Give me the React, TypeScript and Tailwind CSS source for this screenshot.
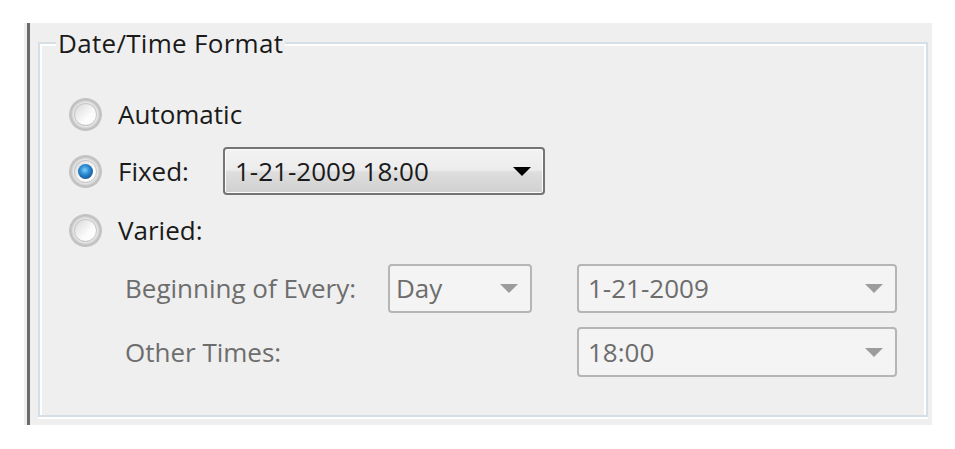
import React from "react";

function Arrow({ color }: { color: string }) {
  return (
    <svg width="18" height="9" viewBox="0 0 18 9" className="shrink-0">
      <path d="M0 0 H18 L9 9 Z" fill={color} />
    </svg>
  );
}

function Radio({ checked }: { checked?: boolean }) {
  return (
    <div className="relative w-[31px] h-[31px] shrink-0 rounded-full bg-[radial-gradient(circle_at_50%_50%,#f4f4f4_0%,#e6e6e6_55%,#b0b0b0_72%,#8a8a8a_100%)] shadow-[0_0_0_1px_#c4c4c4]">
      <div className="absolute inset-[4px] rounded-full bg-[linear-gradient(135deg,#d6d6d6,#fbfbfb_60%,#ffffff)] flex items-center justify-center shadow-[inset_0_0_0_1px_#c8c8c8]">
        {checked && (
          <div className="w-[15px] h-[15px] rounded-full bg-[radial-gradient(circle_at_45%_40%,#7fd0ff_0%,#2f8fd6_35%,#13508f_80%,#0d3c6c_100%)]" />
        )}
      </div>
    </div>
  );
}

export default function App() {
  const font = { fontFamily: '"Open Sans", "Noto Sans", sans-serif' };
  return (
    <div className="w-[955px] h-[449px] bg-white overflow-hidden" style={font}>
      <div className="mt-[23px] ml-[24px] w-[908px] h-[402px] bg-[#efefef] flex">
        <div className="ml-[3px] w-[3px] h-full bg-[#6b6b6b]" />
        <fieldset className="ml-[8px] mt-[2px] w-[890px] h-[392px] border-2 border-[#d5dfe5] shadow-[inset_2px_2px_0_#fff,inset_-2px_0_0_#fff,0_2px_0_#fff]">
          <legend className="ml-[16px] px-[2px] bg-[#efefef] text-[26px] leading-[36px] tracking-[0.3px] text-[#1a1a1a]">
            Date/Time Format
          </legend>
          <div className="flex flex-col text-[26px] text-[#1a1a1a]">
            <div className="mt-[29px] h-[48px] flex items-center pl-[30px]">
              <Radio />
              <span className="ml-[17px]">Automatic</span>
            </div>
            <div className="mt-[9px] h-[48px] flex items-center pl-[30px]">
              <Radio checked />
              <span className="ml-[17px] w-[105px]">Fixed:</span>
              <div className="w-[322px] h-[48px] rounded-[4px] border-2 border-[#747474] bg-[linear-gradient(#f3f3f3_0%,#ececec_48%,#dedede_52%,#d0d0d0_100%)] shadow-[inset_0_0_0_1px_#fbfbfb] flex items-center pl-[10px] pr-[12px]">
                <span className="flex-1">1-21-2009 18:00</span>
                <Arrow color="#000" />
              </div>
            </div>
            <div className="mt-[11px] h-[48px] flex items-center pl-[30px]">
              <Radio />
              <span className="ml-[17px]">Varied:</span>
            </div>
            <div className="mt-[10px] h-[49px] flex items-center pl-[85px] text-[#6d6d6d]">
              <span className="w-[263px]">Beginning of Every:</span>
              <div className="w-[144px] h-[49px] rounded-[4px] border-2 border-[#b5b5b5] bg-[#f4f4f4] flex items-center pl-[6px] pr-[12px]">
                <span className="flex-1">Day</span>
                <Arrow color="#9c9c9c" />
              </div>
              <div className="ml-[45px] w-[320px] h-[49px] rounded-[4px] border-2 border-[#b5b5b5] bg-[#f4f4f4] flex items-center pl-[9px] pr-[12px]">
                <span className="flex-1">1-21-2009</span>
                <Arrow color="#9c9c9c" />
              </div>
            </div>
            <div className="mt-[14px] h-[50px] flex items-center pl-[85px] text-[#6d6d6d]">
              <span className="w-[452px]">Other Times:</span>
              <div className="w-[320px] h-[50px] rounded-[4px] border-2 border-[#b5b5b5] bg-[#f4f4f4] flex items-center pl-[9px] pr-[12px]">
                <span className="flex-1">18:00</span>
                <Arrow color="#9c9c9c" />
              </div>
            </div>
          </div>
        </fieldset>
      </div>
    </div>
  );
}
